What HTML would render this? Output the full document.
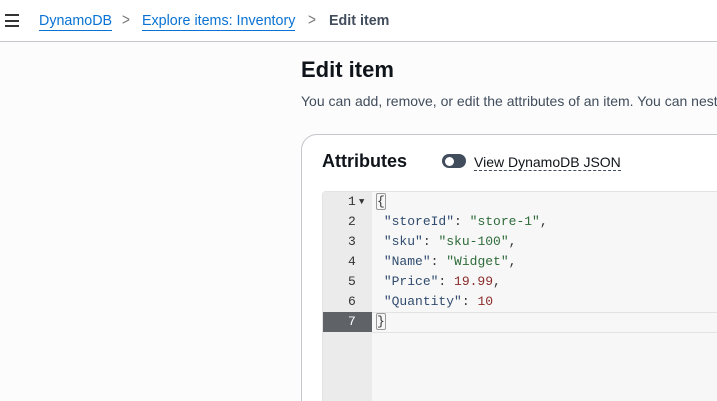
<!DOCTYPE html>
<html style="overflow:hidden"><head><style>
html,body{margin:0;width:717px;height:401px;overflow:hidden}
body{background:#fff;font-family:"Liberation Sans",sans-serif;position:relative}
.top{position:absolute;left:0;top:0;width:717px;height:41px;border-bottom:1px solid #c6c6cd;background:#fff}
.ham{position:absolute;left:5px;top:14px;width:14px}
.ham div{height:2px;background:#333;margin-bottom:3.5px}
.bc{position:absolute;top:13px;font-size:14.3px}
.bc a{color:#0972d3;text-decoration:none;border-bottom:1px solid #0972d3;padding-bottom:1px}
.sep{position:absolute;top:10px;color:#777;font-size:17px;transform:scaleX(.8)}
.main{position:absolute;top:42px;left:0;width:717px;height:359px;background:#fcfcfc}
h1{position:absolute;left:301px;top:57px;margin:0;font-size:22px;font-weight:bold;color:#0f141a}
.desc{position:absolute;left:301px;top:93px;font-size:14px;color:#414d5c;white-space:nowrap}
.card{position:absolute;left:301px;top:134px;width:440px;height:300px;border:1px solid #c6c6cd;border-radius:16px;background:#fff}
.att{position:absolute;left:322px;top:151px;font-size:18px;font-weight:bold;color:#0f141a}
.tog{position:absolute;left:442px;top:154px;width:24px;height:14px;border-radius:8px;background:#414d5c}
.tog:after{content:"";position:absolute;left:3px;top:2.5px;width:9px;height:9px;border-radius:50%;background:#fff}
.vj{position:absolute;left:474px;top:154px;font-size:14px;color:#0f141a;border-bottom:1px dashed #414d5c}
.ed{position:absolute;left:322px;top:191px;width:400px;height:215px;background:#f7f7f7;border-top:1px solid #e3e3e3;border-left:1px solid #e3e3e3;border-radius:4px 0 0 0}
.gut{position:absolute;left:0;top:0;width:49px;height:100%;background:#ebebeb}
.ln{position:absolute;left:0;width:49px;height:20px;font:13px "Liberation Mono",monospace;color:#333;line-height:20px}
.ln span{position:absolute;left:25px}
.code{position:absolute;left:53px;font:13px "Liberation Mono",monospace;line-height:20px;white-space:pre;color:#333}
.k{color:#314c6f}.s{color:#2f6b3a}.n{color:#8a2b2b}
.br{border:1px solid #999;border-radius:2px}
</style></head><body>
<div class="top">
<div class="ham"><div></div><div></div><div></div></div>
<div class="bc" style="left:39px"><a>DynamoDB</a></div>
<div class="sep" style="left:121px">&gt;</div>
<div class="bc" style="left:142px"><a>Explore items: Inventory</a></div>
<div class="sep" style="left:307px">&gt;</div>
<div class="bc" style="left:329px;color:#414d5c;font-weight:bold">Edit item</div>
</div>
<div class="main"></div>
<h1>Edit item</h1>
<div class="desc">You can add, remove, or edit the attributes of an item. You can nest</div>
<div class="card"></div>
<div class="att">Attributes</div>
<div class="tog"></div>
<div class="vj">View DynamoDB JSON</div>
<div class="ed">
<div class="gut"></div>
<div style="position:absolute;left:49px;top:120px;width:350px;height:19px;border-top:1px solid #e3e3e3;border-bottom:1px solid #e3e3e3"></div>
<div class="ln" style="top:0"><span>1</span><span style="left:36px;font-size:9px">▼</span></div>
<div class="ln" style="top:20px"><span>2</span></div>
<div class="ln" style="top:40px"><span>3</span></div>
<div class="ln" style="top:60px"><span>4</span></div>
<div class="ln" style="top:80px"><span>5</span></div>
<div class="ln" style="top:100px"><span>6</span></div>
<div class="ln" style="top:120px;background:#5f6368;color:#fff"><span>7</span></div>
<div class="code" style="top:0"><span class="br">{</span></div>
<div class="code" style="top:20px"> <span class="k">"storeId"</span>: <span class="s">"store-1"</span>,</div>
<div class="code" style="top:40px"> <span class="k">"sku"</span>: <span class="s">"sku-100"</span>,</div>
<div class="code" style="top:60px"> <span class="k">"Name"</span>: <span class="s">"Widget"</span>,</div>
<div class="code" style="top:80px"> <span class="k">"Price"</span>: <span class="n">19.99</span>,</div>
<div class="code" style="top:100px"> <span class="k">"Quantity"</span>: <span class="n">10</span></div>
<div class="code" style="top:120px"><span class="br">}</span></div>
</div>
</body></html>
